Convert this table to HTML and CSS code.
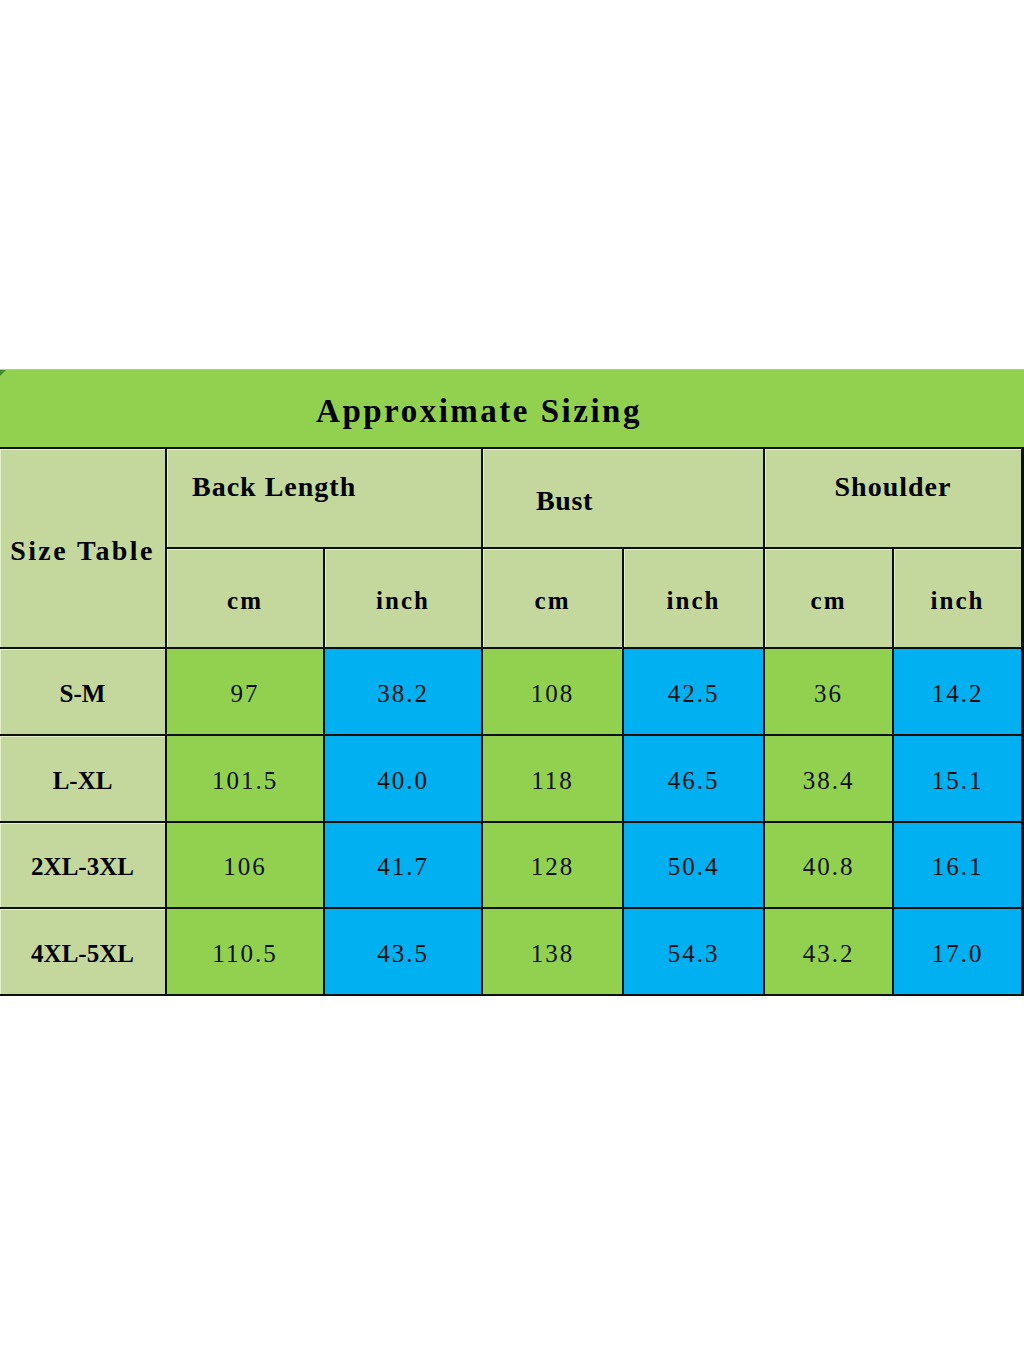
FILE: index.html
```html
<!DOCTYPE html>
<html lang="en">
<head>
<meta charset="utf-8">
<title>Approximate Sizing</title>
<link rel="stylesheet" href="styles.css">
</head>
<body>
<div class="page">
  <div class="top-space"></div>
  <div class="chart">
    <div class="title"><span class="corner"></span>Approximate Sizing</div>
    <div class="grid">
      <div class="cell head size-table">Size Table</div>
      <div class="cell head back">Back Length</div>
      <div class="cell head bust">Bust</div>
      <div class="cell head shoulder">Shoulder</div>
      <div class="cell head unit">cm</div>
      <div class="cell head unit">inch</div>
      <div class="cell head unit">cm</div>
      <div class="cell head unit">inch</div>
      <div class="cell head unit">cm</div>
      <div class="cell head unit">inch</div>

      <div class="cell label">S-M</div>
      <div class="cell num g">97</div>
      <div class="cell num b">38.2</div>
      <div class="cell num g">108</div>
      <div class="cell num b">42.5</div>
      <div class="cell num g">36</div>
      <div class="cell num b">14.2</div>

      <div class="cell label">L-XL</div>
      <div class="cell num g">101.5</div>
      <div class="cell num b">40.0</div>
      <div class="cell num g">118</div>
      <div class="cell num b">46.5</div>
      <div class="cell num g">38.4</div>
      <div class="cell num b">15.1</div>

      <div class="cell label">2XL-3XL</div>
      <div class="cell num g">106</div>
      <div class="cell num b">41.7</div>
      <div class="cell num g">128</div>
      <div class="cell num b">50.4</div>
      <div class="cell num g">40.8</div>
      <div class="cell num b">16.1</div>

      <div class="cell label">4XL-5XL</div>
      <div class="cell num g">110.5</div>
      <div class="cell num b">43.5</div>
      <div class="cell num g">138</div>
      <div class="cell num b">54.3</div>
      <div class="cell num g">43.2</div>
      <div class="cell num b">17.0</div>
    </div>
  </div>
</div>
</body>
</html>
```

FILE: styles.css
```css
html, body {
  margin: 0;
  padding: 0;
  background: #ffffff;
}

.page {
  width: 1024px;
  height: 1365px;
  background: #ffffff;
  font-family: "Liberation Serif", "Times New Roman", serif;
  color: #000;
}

.top-space {
  height: 369px;
}

.chart {
  width: 1024px;
}

.title {
  position: relative;
  height: 78px;
  border-top: 1px solid #b9c4ae;
  background: #92d050;
  display: flex;
  align-items: center;
  justify-content: center;
  padding: 6px 66px 0 0;
  box-sizing: border-box;
  font-size: 33px;
  font-weight: bold;
  letter-spacing: 2.5px;
}

.corner {
  position: absolute;
  left: 0;
  top: 0;
  width: 0;
  height: 0;
  border-top: 6px solid #3f8a2a;
  border-right: 6px solid transparent;
}

.grid {
  width: 1023px;
  display: grid;
  grid-template-columns: 165px 156px 156px 139px 139px 127px 127px;
  grid-template-rows: 98px 98px 85px 85px 84px 85px;
  gap: 2px;
  padding: 2px 2px 2px 0;
  background: #0d0f0b;
}

.cell {
  display: flex;
  align-items: center;
  justify-content: center;
  white-space: pre;
}

.head {
  background: #c4d89d;
  box-shadow: inset 1px 1px 0 #e4efcc;
  font-size: 28px;
  font-weight: bold;
}

.size-table {
  grid-row: 1 / span 2;
  grid-column: 1;
  padding-top: 6px;
  letter-spacing: 2.4px;
}

.back {
  grid-column: 2 / span 2;
  justify-content: flex-start;
  padding: 0 0 22px 25px;
  letter-spacing: 1px;
}

.bust {
  grid-column: 4 / span 2;
  justify-content: flex-start;
  padding: 6px 0 0 53px;
  letter-spacing: 0.6px;
}

.shoulder {
  grid-column: 6 / span 2;
  padding-bottom: 22px;
  letter-spacing: 1px;
}

.unit {
  padding-top: 5px;
  font-size: 25px;
  letter-spacing: 2px;
}

.label {
  background: #c4d89d;
  box-shadow: inset 1px 1px 0 #e4efcc;
  font-size: 25px;
  font-weight: bold;
  letter-spacing: 0;
  padding-top: 4px;
}

.num {
  font-size: 25px;
  letter-spacing: 2px;
  padding-top: 4px;
  color: #111;
}

.g {
  background: #92d050;
}

.b {
  background: #00b0f0;
}
```
